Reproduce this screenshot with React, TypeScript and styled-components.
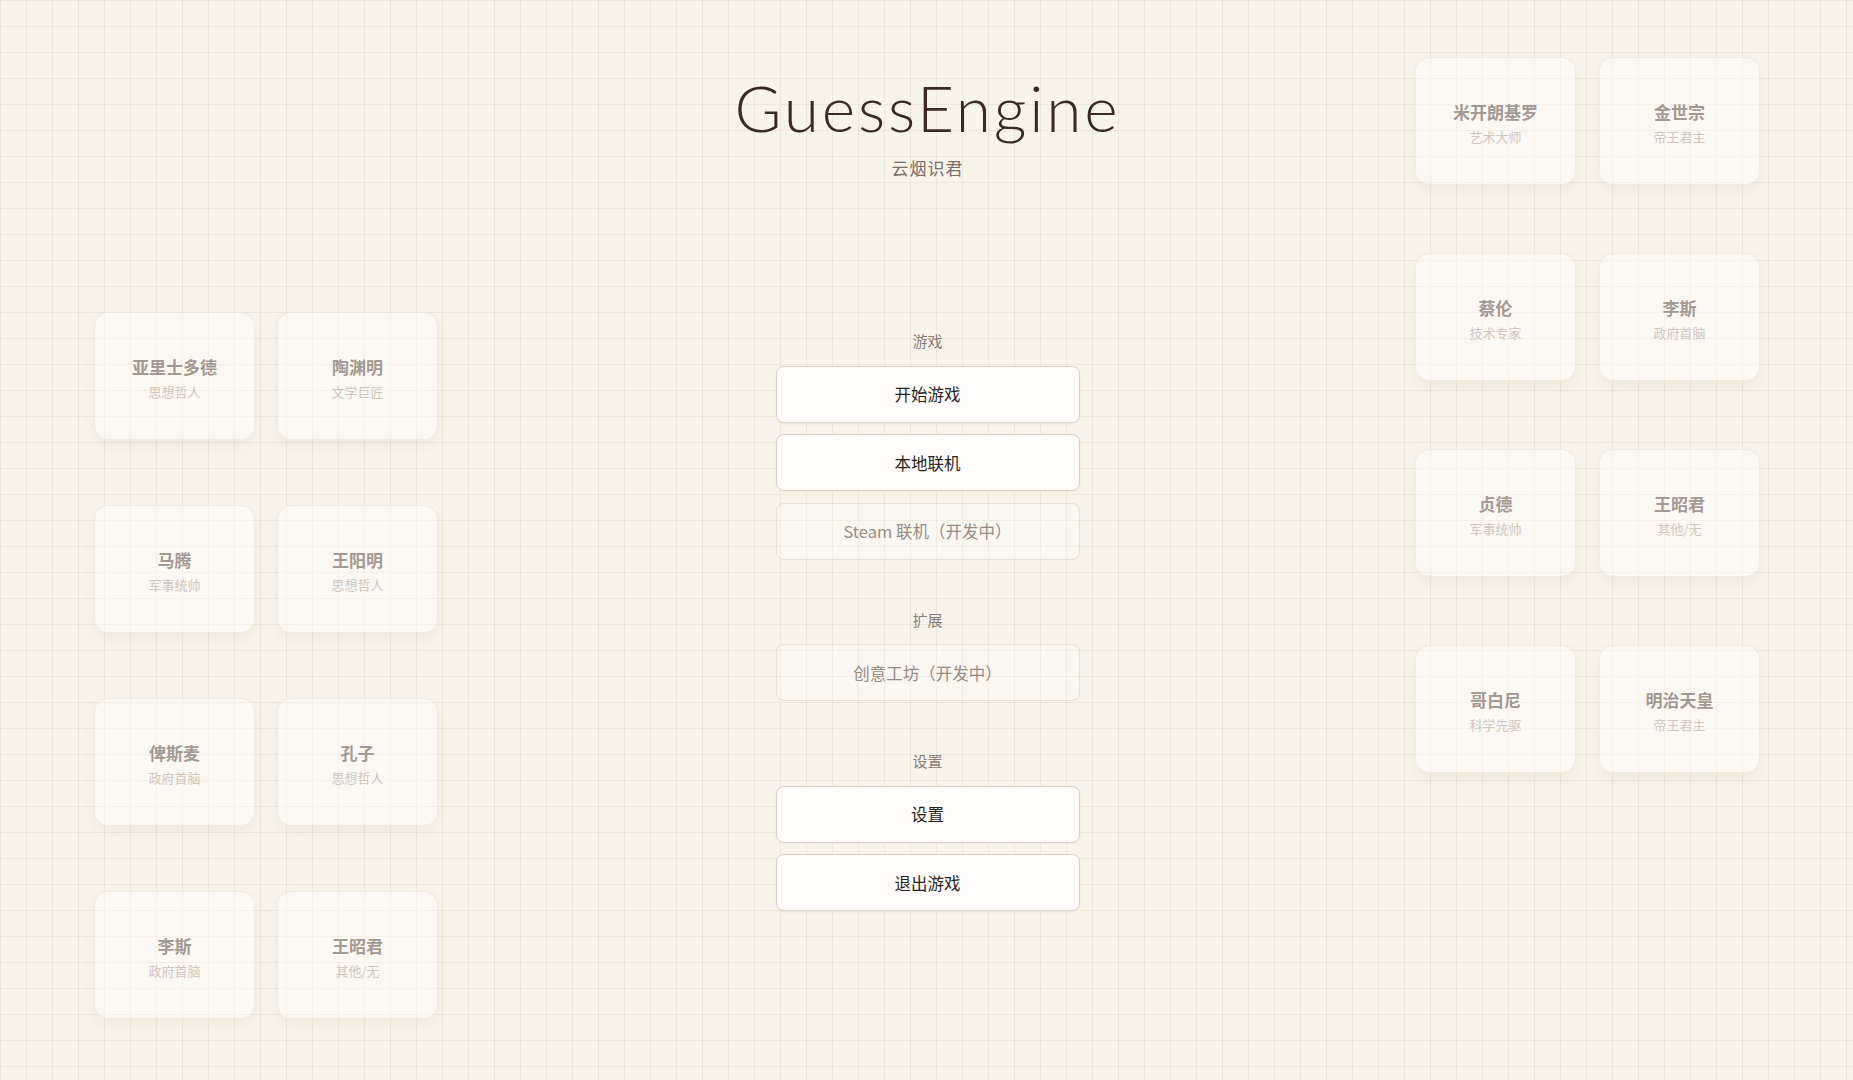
import React, { FC } from 'react'
import styled, { createGlobalStyle } from 'styled-components'

const GlobalStyle = createGlobalStyle`
  html, body {
    margin: 0;
    padding: 0;
    height: 100%;
    overflow: hidden;
  }
  body {
    font-family: "Noto Sans CJK SC", "Noto Sans", sans-serif;
    background: #f8f4eb;
  }
`

type Figure = {
  name: string
  role: string
}

const leftFigures: Figure[] = [
  {name: '亚里士多德', role: '思想哲人'},
  {name: '陶渊明', role: '文学巨匠'},
  {name: '马腾', role: '军事统帅'},
  {name: '王阳明', role: '思想哲人'},
  {name: '俾斯麦', role: '政府首脑'},
  {name: '孔子', role: '思想哲人'},
  {name: '李斯', role: '政府首脑'},
  {name: '王昭君', role: '其他/无'},
]

const rightFigures: Figure[] = [
  {name: '米开朗基罗', role: '艺术大师'},
  {name: '金世宗', role: '帝王君主'},
  {name: '蔡伦', role: '技术专家'},
  {name: '李斯', role: '政府首脑'},
  {name: '贞德', role: '军事统帅'},
  {name: '王昭君', role: '其他/无'},
  {name: '哥白尼', role: '科学先驱'},
  {name: '明治天皇', role: '帝王君主'},
]

type MenuItem = {
  label: string
  disabled?: boolean
}

type MenuSection = {
  title: string
  items: MenuItem[]
}

const sections: MenuSection[] = [
  {
    title: '游戏',
    items: [
      {label: '开始游戏'},
      {label: '本地联机'},
      {label: 'Steam 联机（开发中）', disabled: true},
    ],
  },
  {
    title: '扩展',
    items: [{label: '创意工坊（开发中）', disabled: true}],
  },
  {
    title: '设置',
    items: [{label: '设置'}, {label: '退出游戏'}],
  },
]

const CardColumn: FC<{figures: Figure[]; top: number; rowGap: number; colGap: number}> = ({
  figures,
  top,
  rowGap,
  colGap,
}) => (
  <CardGrid $top={top} $rowGap={rowGap} $colGap={colGap}>
    {figures.map((f, i) => (
      <FigureCard key={i}>
        <FigureName>{f.name}</FigureName>
        <FigureRole>{f.role}</FigureRole>
      </FigureCard>
    ))}
  </CardGrid>
)

const App: FC = () => {
  return (
    <>
      <GlobalStyle />
      <Page>
        <CardColumn figures={leftFigures} top={312} rowGap={65} colGap={22} />
        <Center>
          <Title>GuessEngine</Title>
          <Subtitle>云烟识君</Subtitle>
          <Menu>
            {sections.map((s) => (
              <Section key={s.title}>
                <SectionTitle>{s.title}</SectionTitle>
                {s.items.map((item) => (
                  <MenuButton key={item.label} $disabled={item.disabled}>
                    {item.label}
                  </MenuButton>
                ))}
              </Section>
            ))}
          </Menu>
        </Center>
        <CardColumn figures={rightFigures} top={57} rowGap={68} colGap={23} />
      </Page>
    </>
  )
}

export default App

const Page = styled.div`
  height: 100vh;
  box-sizing: border-box;
  padding: 0 92px 0 94px;
  display: grid;
  grid-template-columns: 346px 1fr 346px;
  background-color: #f8f4eb;
  background-image:
    linear-gradient(to right, rgba(196, 176, 148, 0.2) 1px, transparent 1px),
    linear-gradient(to bottom, rgba(196, 176, 148, 0.2) 1px, transparent 1px);
  background-size: 26px 26px;
  overflow: hidden;
`

const CardGrid = styled.div<{$top: number; $rowGap: number; $colGap: number}>`
  padding-top: ${(p) => p.$top}px;
  display: grid;
  grid-template-columns: 161px 161px;
  grid-auto-rows: 128px;
  column-gap: ${(p) => p.$colGap}px;
  row-gap: ${(p) => p.$rowGap}px;
  align-content: start;
`

const FigureCard = styled.div`
  box-sizing: border-box;
  border-radius: 14px;
  background: rgba(255, 255, 255, 0.4);
  border: 1px solid rgba(232, 223, 212, 0.6);
  box-shadow: 0 6px 14px rgba(140, 115, 90, 0.07);
  display: flex;
  flex-direction: column;
  align-items: center;
  justify-content: center;
  padding-top: 3px;
`

const FigureName = styled.div`
  font-size: 17px;
  font-weight: 700;
  color: #a39892;
  line-height: 24px;
`

const FigureRole = styled.div`
  font-size: 13px;
  color: #cfc6bf;
  line-height: 18px;
  margin-top: 4px;
`

const Center = styled.div`
  display: flex;
  flex-direction: column;
  align-items: center;
  padding-top: 70px;
`

const Title = styled.h1`
  margin: 0;
  font-family: Lato, "Liberation Sans", sans-serif;
  font-weight: 300;
  font-size: 64px;
  line-height: 76px;
  letter-spacing: 2.8px;
  color: #3b2a24;
`

const Subtitle = styled.div`
  margin-top: 10px;
  font-size: 17px;
  line-height: 24px;
  color: #7d6e67;
  letter-spacing: 1px;
`

const Menu = styled.div`
  margin-top: 151px;
  width: 304px;
  display: flex;
  flex-direction: column;
  gap: 50px;
`

const Section = styled.div`
  display: flex;
  flex-direction: column;
  gap: 11.5px;
`

const SectionTitle = styled.div`
  text-align: center;
  font-size: 15px;
  line-height: 20px;
  color: #8a7d76;
  margin-bottom: 3px;
`

const MenuButton = styled.div<{$disabled?: boolean}>`
  box-sizing: border-box;
  height: 57px;
  display: flex;
  align-items: center;
  justify-content: center;
  border-radius: 8px;
  font-size: 16.5px;
  border: 1px solid ${(p) => (p.$disabled ? 'rgba(224, 214, 203, 0.7)' : '#d8cfc7')};
  background: ${(p) => (p.$disabled ? 'rgba(255, 255, 255, 0.25)' : '#fefdfb')};
  color: ${(p) => (p.$disabled ? '#978b85' : '#2b1f1a')};
  box-shadow: ${(p) => (p.$disabled ? 'none' : '0 1px 3px rgba(120, 100, 80, 0.08)')};
  cursor: ${(p) => (p.$disabled ? 'default' : 'pointer')};
`
